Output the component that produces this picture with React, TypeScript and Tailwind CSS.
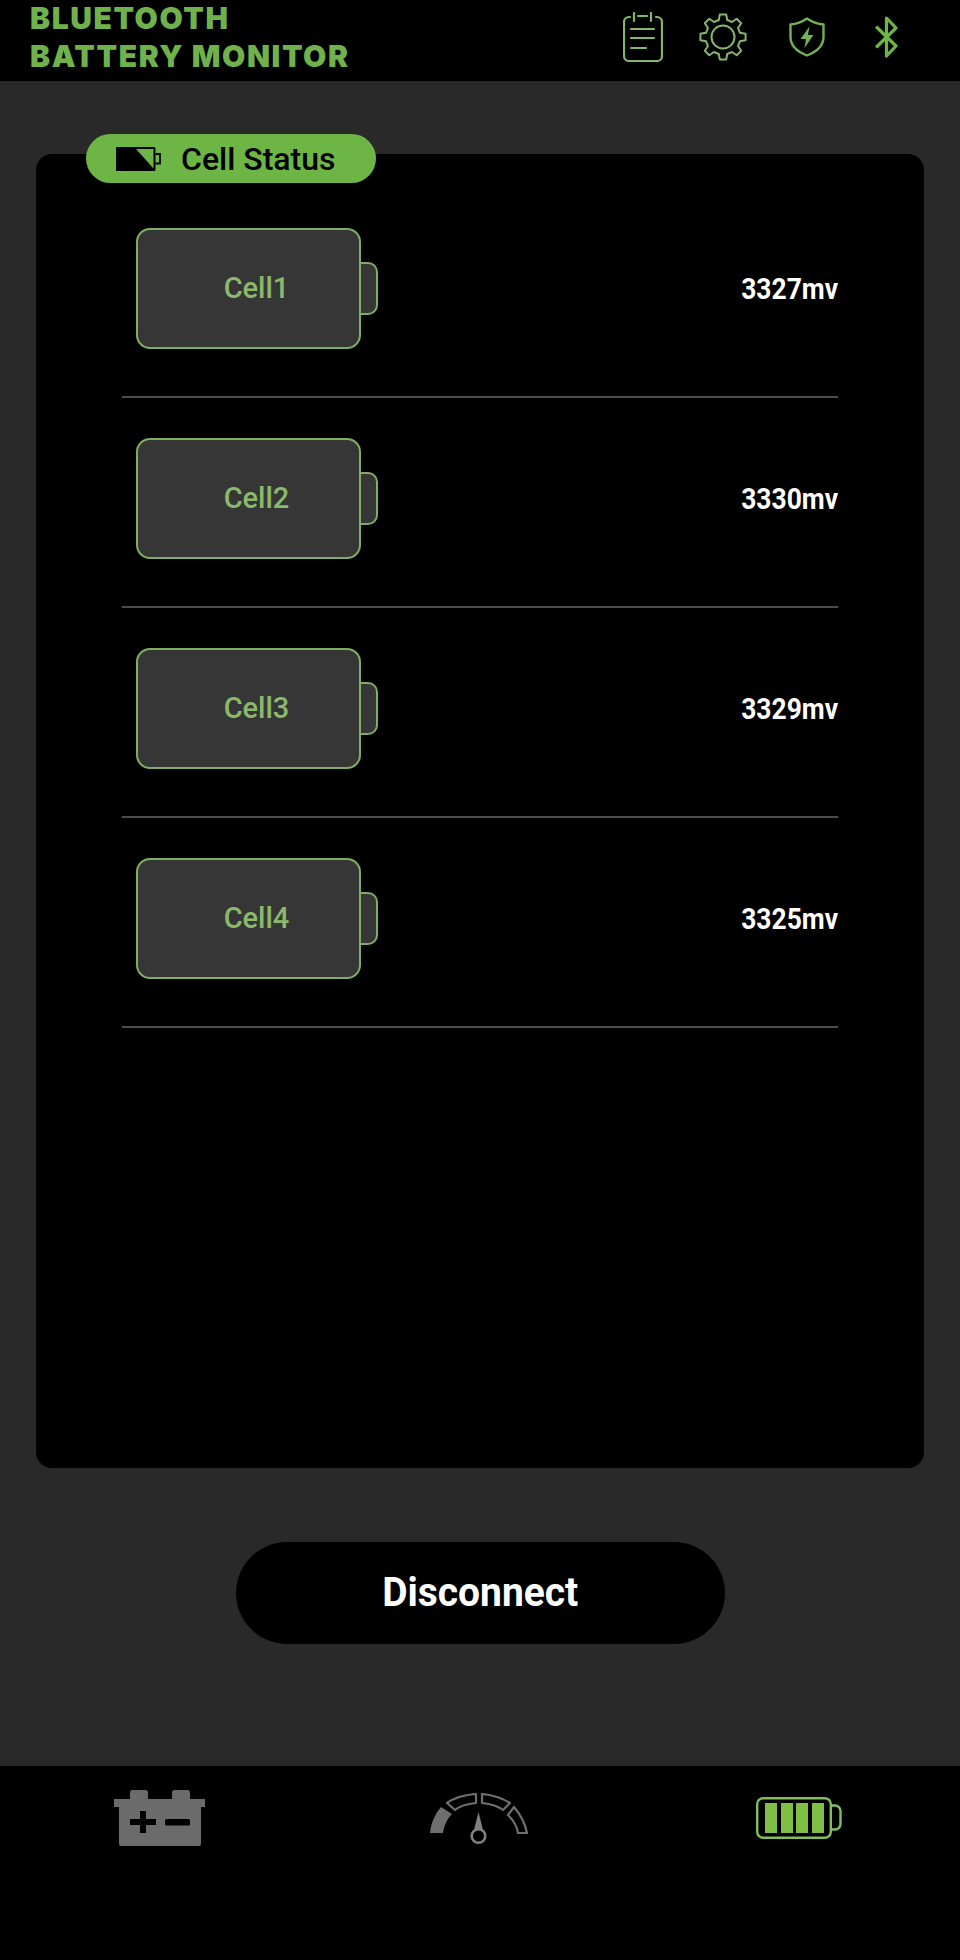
const cells = [
  { name: "Cell1", mv: "3327mv" },
  { name: "Cell2", mv: "3330mv" },
  { name: "Cell3", mv: "3329mv" },
  { name: "Cell4", mv: "3325mv" },
];

// outline of the 8 tooth gear
const gearPath =
  [...Array(8)]
    .map((_, i) => {
      const a = i * 45 - 90;
      const pt = (r: number, d: number) => {
        const t = ((a + d) * Math.PI) / 180;
        return `${(24 + r * Math.cos(t)).toFixed(2)} ${(24 + r * Math.sin(t)).toFixed(2)}`;
      };
      return `L${pt(17.5, -14)} L${pt(22.8, -8)} L${pt(22.8, 8)} L${pt(17.5, 14)}`;
    })
    .join(" ")
    .replace("L", "M") + " Z";

function ClipboardIcon() {
  return (
    <svg width="40" height="50" viewBox="0 0 40 50" fill="none" stroke="#86b56c" strokeWidth="2.2" strokeLinecap="round" strokeLinejoin="round">
      <path d="M7 5H6a5 5 0 0 0-5 5v34a5 5 0 0 0 5 5h28a5 5 0 0 0 5-5V10a5 5 0 0 0-5-5h-1" />
      <path d="M11 1v8M28 1v8M15 4h9" />
      <path d="M8 17h23M8 26h23M8 36h15" />
    </svg>
  );
}

function GearIcon() {
  return (
    <svg width="48" height="48" viewBox="0 0 48 48" fill="none" stroke="#86b56c" strokeWidth="2" strokeLinejoin="round">
      <circle cx="24" cy="24" r="11.500" />
      <path d={gearPath} />
    </svg>
  );
}

function ShieldIcon() {
  return (
    <svg width="36" height="40" viewBox="0 0 36 40" fill="none">
      <path d="M18 1.500C23 5 28 7 34.500 7.500V20C34.500 29 27 35 18 38.500 9 35 1.500 29 1.500 20V7.500C8 7 13 5 18 1.500Z" stroke="#72b254" strokeWidth="2.400" strokeLinejoin="round" />
      <path d="M20.500 9.500 11.500 22h5.500l-1.500 9 9-13h-5.500z" fill="#72b254" />
    </svg>
  );
}

function BluetoothIcon() {
  return (
    <svg width="24" height="42" viewBox="0 0 24 42" fill="none" stroke="#6db544" strokeWidth="3.200" strokeLinecap="round" strokeLinejoin="round">
      <path d="M2 11.500 21 30 11.500 40V2L21 12 2 30.500" />
    </svg>
  );
}

function PillBattery() {
  return (
    <svg width="46" height="26" viewBox="0 0 46 26" className="shrink-0">
      <path d="M1 1h38a1.500 1.500 0 0 1 1.500 1.500v21a1.500 1.500 0 0 1-1.500 1.500H1z" fill="#000" />
      <path d="M21 3h17.500v19.500z" fill="#6db544" />
      <path d="M40.500 8H45v9.500h-4.500" fill="none" stroke="#000" strokeWidth="1.800" />
    </svg>
  );
}

function CarBattery() {
  return (
    <svg width="92" height="56" viewBox="0 0 92 56">
      <rect x="17" y="0" width="18" height="10" rx="2.500" fill="#6b6b6b" />
      <rect x="59" y="0" width="18" height="10" rx="2.500" fill="#6b6b6b" />
      <path d="M1 9h91v8h-4v37a2 2 0 0 1-2 2H8a2 2 0 0 1-2-2V17H1z" fill="#6b6b6b" />
      <path d="M27 21h6v8h10v6H33v8h-6v-8H17v-6h10z" fill="#000" />
      <rect x="52" y="29" width="25" height="6.500" rx="1.500" fill="#000" />
    </svg>
  );
}

function GaugeIcon() {
  return (
    <svg width="100" height="52" viewBox="0 0 100 52" fill="none">
      <path d="M1 40C2 30 6 21 12 14L23 21C18 26 15 33 14 40z" fill="#6f6f6f" />
      <path d="M18 10C25 5 35 2 47 1V10C37 11 31 13 26 17z" stroke="#6f6f6f" strokeWidth="2.200" strokeLinejoin="round" />
      <path d="M53 1C64 2 73 5 81 10L74 17C69 13 62 11 53 10z" stroke="#6f6f6f" strokeWidth="2.200" strokeLinejoin="round" />
      <path d="M85 14C91 21 96 30 98 40H89C88 33 84 27 79 22z" stroke="#6f6f6f" strokeWidth="2.200" strokeLinejoin="round" />
      <path d="M49.500 19 54 37H45z" fill="#808080" />
      <circle cx="49.500" cy="43" r="6.800" stroke="#808080" strokeWidth="2.600" />
    </svg>
  );
}

function GreenBattery() {
  return (
    <svg width="86" height="42" viewBox="0 0 86 42" fill="none">
      <rect x="1.200" y="1.200" width="73.600" height="39.600" rx="6" stroke="#83bd5c" strokeWidth="2.400" />
      <path d="M75 8.500h4a5.500 5.500 0 0 1 5.500 5.500v13a5.500 5.500 0 0 1-5.500 5.500h-4" stroke="#83bd5c" strokeWidth="2.400" />
      <rect x="9" y="6" width="12" height="30" fill="#7fbf45" />
      <rect x="25" y="6" width="12" height="30" fill="#7fbf45" />
      <rect x="40" y="6" width="12" height="30" fill="#7fbf45" />
      <rect x="56" y="6" width="12" height="30" fill="#7fbf45" />
    </svg>
  );
}

function CellRow({ name, mv }: { name: string; mv: string }) {
  return (
    <div className="flex items-center justify-between h-[210px] pt-[40px] pb-[47px] pl-[14px] border-b-2 border-[#4d4d4d]">
      <div className="flex items-center">
        <div className="w-[225px] h-[121px] rounded-[14px] border-2 border-[#7fae63] bg-[#363636] flex items-center justify-center pl-[16px]">
          <span className="text-[29px] font-medium text-[#8ab96c]">{name}</span>
        </div>
        <div className="w-[19px] h-[53px] -ml-[2px] rounded-r-[10px] border-2 border-[#7fae63] bg-[#363636]" />
      </div>
      <span className="text-[30px] font-bold text-white scale-x-[0.88] origin-right">{mv}</span>
    </div>
  );
}

export default function App() {
  return (
    <div className="w-[960px] h-[1960px] flex flex-col bg-[#292929] font-['Roboto',sans-serif] overflow-hidden">
      <header className="h-[81px] bg-black flex items-center justify-between shrink-0 pl-[30px] pr-[61px]">
        <div className="font-['Inter',sans-serif] font-black text-[30px] tracking-[1.6px] leading-[38px] text-[#6fb24c] -mt-[7px]">
          <div>BLUETOOTH</div>
          <div>BATTERY MONITOR</div>
        </div>
        <div className="flex items-center -mt-[7px]">
          <ClipboardIcon />
          <div className="ml-[36px]"><GearIcon /></div>
          <div className="ml-[42px]"><ShieldIcon /></div>
          <div className="ml-[50px]"><BluetoothIcon /></div>
        </div>
      </header>

      <main className="flex-1 flex flex-col items-center px-[36px] pt-[73px]">
        <div className="relative w-[888px] h-[1314px] shrink-0 bg-black rounded-[16px] pt-[34px] px-[86px]">
          <div className="absolute left-[50px] -top-[20px] w-[290px] h-[49px] rounded-full bg-[#6db544] flex items-center pl-[29px] gap-[20px]">
            <PillBattery />
            <span className="text-[32px] font-medium text-black leading-none">Cell Status</span>
          </div>
          {cells.map((c) => (
            <CellRow key={c.name} name={c.name} mv={c.mv} />
          ))}
        </div>
        <button className="mt-[74px] w-[489px] h-[102px] rounded-full bg-black text-white text-[41px] font-bold">
          <span className="inline-block scale-x-[0.95]">Disconnect</span>
        </button>
      </main>

      <footer className="h-[194px] bg-black shrink-0 flex items-start justify-between pl-[113px] pr-[118px]">
        <div className="mt-[24px]"><CarBattery /></div>
        <div className="mt-[27px] -ml-[3px]"><GaugeIcon /></div>
        <div className="mt-[31px]"><GreenBattery /></div>
      </footer>
    </div>
  );
}
